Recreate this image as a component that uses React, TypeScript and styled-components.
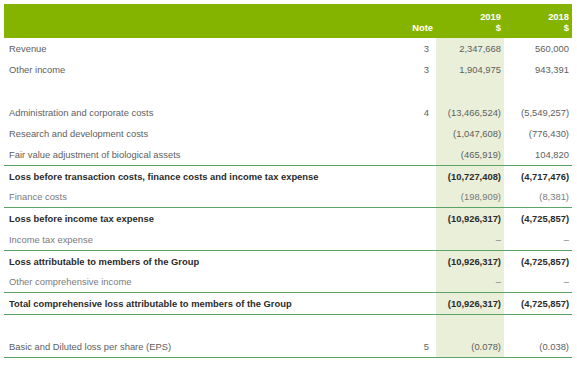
import React from 'react'
import styled, { createGlobalStyle } from 'styled-components'

const GlobalStyle = createGlobalStyle`
  html, body { margin: 0; padding: 0; background: #ffffff; }
  body { font-family: "Liberation Sans", Arial, sans-serif; }
`

const Page = styled.div`
  padding: 4px 5px 0 4px;
  width: 568px;
`

const Grid = styled.div`
  display: grid;
  grid-template-columns: 1fr 40px 68px 68px;
`

const HeadCell = styled.div`
  background: #84b400;
  color: #ffffff;
  font-weight: bold;
  font-size: 9.4px;
  line-height: 11px;
  height: 34px;
  box-sizing: border-box;
  display: flex;
  flex-direction: column;
  justify-content: flex-end;
  align-items: flex-end;
  padding: 0 3px 5px 0;
  text-align: right;
`

const Cell = styled.div<{ $bold?: boolean; $light?: boolean; $line?: boolean; $shade?: boolean; $num?: boolean; $gap?: boolean }>`
  height: ${p => (p.$gap ? '22px' : p.$line ? '20.5px' : '21px')};
  box-sizing: content-box;
  display: flex;
  align-items: center;
  justify-content: ${p => (p.$num ? 'flex-end' : 'flex-start')};
  padding: ${p => (p.$num ? '0 3px 0 0' : '0 0 0 5px')};
  font-size: 9.4px;
  font-weight: ${p => (p.$bold ? 'bold' : 'normal')};
  color: ${p => (p.$bold ? '#2b2b2b' : p.$light ? '#7a7a7a' : '#5e5e5e')};
  background: ${p => (p.$shade ? '#e9efd9' : 'transparent')};
  border-bottom: ${p => (p.$line ? '1px solid #5aa468' : '0')};
  white-space: nowrap;
`

const NoteCell = styled(Cell)`
  padding-right: 7px;
`

type Row = {
  label: string
  note?: string
  y19?: string
  y18?: string
  bold?: boolean
  light?: boolean
  line?: boolean
}

const rows: Row[] = [
  { label: 'Revenue', note: '3', y19: '2,347,668', y18: '560,000' },
  { label: 'Other income', note: '3', y19: '1,904,975', y18: '943,391' },
  { label: '' },
  { label: 'Administration and corporate costs', note: '4', y19: '(13,466,524)', y18: '(5,549,257)' },
  { label: 'Research and development costs', y19: '(1,047,608)', y18: '(776,430)' },
  { label: 'Fair value adjustment of biological assets', y19: '(465,919)', y18: '104,820', line: true },
  { label: 'Loss before transaction costs, finance costs and income tax expense', y19: '(10,727,408)', y18: '(4,717,476)', bold: true },
  { label: 'Finance costs', y19: '(198,909)', y18: '(8,381)', light: true, line: true },
  { label: 'Loss before income tax expense', y19: '(10,926,317)', y18: '(4,725,857)', bold: true },
  { label: 'Income tax expense', y19: '–', y18: '–', light: true, line: true },
  { label: 'Loss attributable to members of the Group', y19: '(10,926,317)', y18: '(4,725,857)', bold: true },
  { label: 'Other comprehensive income', y19: '–', y18: '–', light: true, line: true },
  { label: 'Total comprehensive loss attributable to members of the Group', y19: '(10,926,317)', y18: '(4,725,857)', bold: true, line: true },
  { label: '' },
  { label: 'Basic and Diluted loss per share (EPS)', note: '5', y19: '(0.078)', y18: '(0.038)', line: true },
]

export default function App() {
  return (
    <Page>
      <GlobalStyle />
      <Grid>
        <HeadCell />
        <HeadCell>Note</HeadCell>
        <HeadCell>
          <span>2019</span>
          <span>$</span>
        </HeadCell>
        <HeadCell>
          <span>2018</span>
          <span>$</span>
        </HeadCell>
        {rows.map((r, i) => {
          const gap = r.label === ''
          return (
            <React.Fragment key={i}>
              <Cell $gap={gap} $bold={r.bold} $light={r.light} $line={r.line}>{r.label}</Cell>
              <NoteCell $gap={gap} $num $line={r.line}>{r.note}</NoteCell>
              <Cell $gap={gap} $num $shade $bold={r.bold} $light={r.light} $line={r.line}>{r.y19}</Cell>
              <Cell $gap={gap} $num $bold={r.bold} $light={r.light} $line={r.line}>{r.y18}</Cell>
            </React.Fragment>
          )
        })}
      </Grid>
    </Page>
  )
}
